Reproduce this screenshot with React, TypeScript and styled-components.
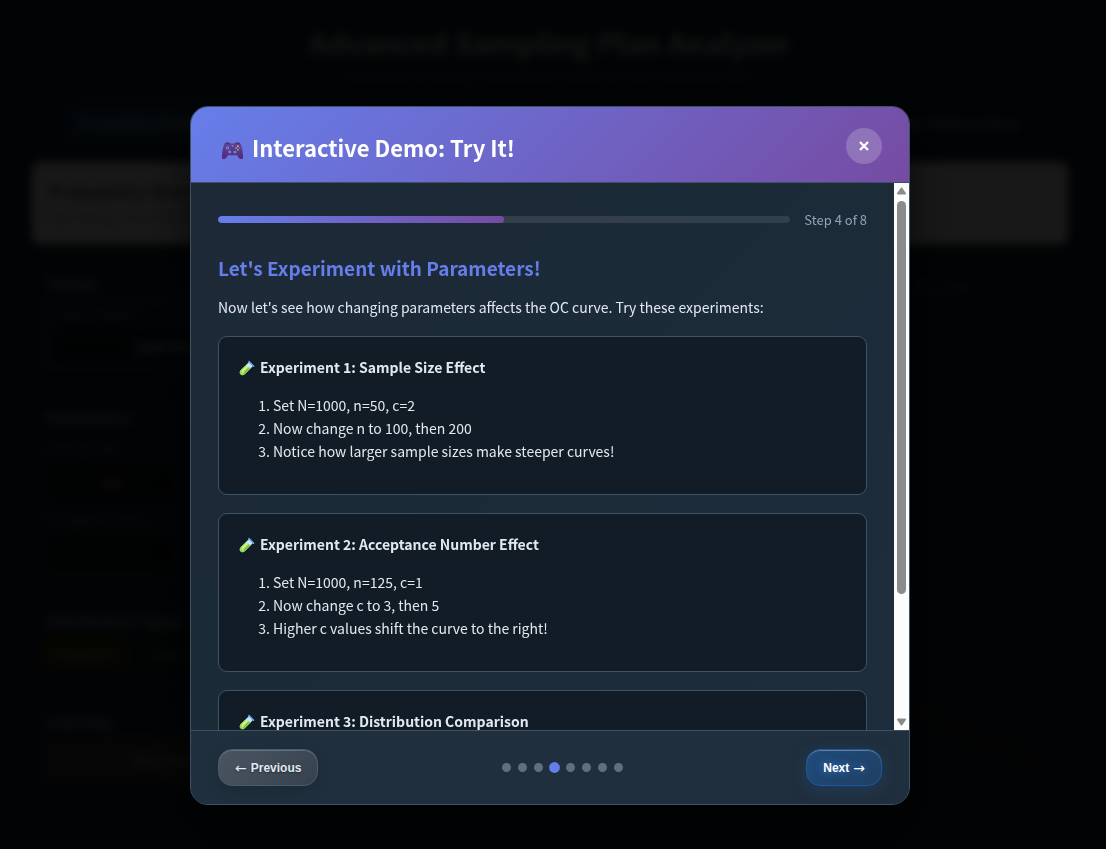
import React, { useState } from "react";
import styled, { createGlobalStyle } from "styled-components";

const bodyFont = `"Noto Sans CJK SC", "Noto Sans", sans-serif`;

const GlobalStyle = createGlobalStyle`
  *, *::before, *::after { box-sizing: border-box; }
  html { background: #14202b; }
  body {
    margin: 0;
    min-height: 100vh;
    font-family: ${bodyFont};
    font-size: 14px;
    line-height: 23px;
    color: #e2e8f0;
    overflow: hidden;
  }
  h1, h2, h3, p, ol { margin: 0; }
`;

/* ---------- analyzer page behind the dialog ---------- */

const Page = styled.main`
  display: flex;
  flex-direction: column;
  height: 100vh;
  overflow: hidden;
  padding: 20px 38px 0 32px;
`;

const PageHeader = styled.header`
  display: flex;
  flex-direction: column;
  align-items: center;
  padding-bottom: 10px;
`;

const PageTitle = styled.h1`
  font-size: 29px;
  line-height: 44px;
  font-weight: 700;
  color: #c8c8c8;
`;

const PageSubtitle = styled.p`
  font-size: 13px;
  color: #6a7078;
`;

const TabBar = styled.nav`
  display: flex;
  justify-content: space-between;
  padding: 4px 30px;
  margin-bottom: 14px;
`;

const Tab = styled.button<{ $active?: boolean }>`
  height: 43px;
  padding: 0 18px;
  border: 0;
  border-radius: 12px;
  font-family: ${bodyFont};
  font-size: 14px;
  font-weight: 600;
  color: ${(p) => (p.$active ? "#a0b4c4" : "#8a8a8a")};
  background: ${(p) => (p.$active ? "#1b3d50" : "transparent")};
`;

const Banner = styled.section`
  padding: 16px;
  height: 82px;
  border-radius: 8px;
  background: #f2f2f2;
  color: #a0a0a0;
  margin-bottom: 24px;
  flex-shrink: 0;
`;

const BannerTitle = styled.h2`
  font-size: 18px;
  line-height: 26px;
  color: #555;
`;

const Columns = styled.div`
  display: flex;
  gap: 24px;
`;

const Sidebar = styled.aside`
  flex: 0 0 290px;
  display: flex;
  flex-direction: column;
  gap: 22px;
`;

const Panel = styled.section`
  display: flex;
  flex-direction: column;
  gap: 4px;
  padding: 4px 10px 12px;
  border-radius: 12px;
  background: rgba(255, 255, 255, 0.02);
  color: #7c8590;
`;

const PanelTitle = styled.h3`
  padding-left: 4px;
  font-size: 15px;
  line-height: 23px;
  color: #a0a6ad;
`;

const ThemeBox = styled.label`
  display: flex;
  flex-direction: column;
  gap: 4px;
  padding: 0 6px 2px;
  border: 4px solid #263a66;
  border-radius: 8px;
  background: #122c3a;
  color: #5d8090;
`;

const Field = styled.input`
  width: 100%;
  height: 34px;
  border: 0;
  border-radius: 6px;
  background: #101418;
  color: #c0c0c0;
  font-family: ${bodyFont};
  text-align: center;
`;

const ThemeSelect = styled.select`
  width: 100%;
  height: 32px;
  border: 0;
  border-radius: 6px;
  background: #06141d;
  color: #f0f0f0;
  font-family: ${bodyFont};
  font-weight: 700;
  text-align: center;
  text-align-last: center;
`;

const FieldLabel = styled.label`
  display: flex;
  flex-direction: column;
  gap: 6px;
  width: 50%;
  padding: 4px 0 0 4px;
`;

const ChipRow = styled.div`
  display: flex;
  gap: 8px;
`;

const Chip = styled.button<{ $tone: string }>`
  flex: 1;
  height: 36px;
  padding: 0;
  border: 0;
  border-radius: 12px;
  font-family: ${bodyFont};
  color: #9a9a80;
  background: ${(p) => p.$tone};
`;

const TutorialButton = styled.button`
  height: 46px;
  border: 0;
  border-radius: 14px;
  background: #353a40;
  color: #a0a0a0;
  font-family: ${bodyFont};
  font-weight: 600;
`;

const ChartArea = styled.section`
  flex: 1;
  display: flex;
  flex-direction: column;
  align-items: flex-end;
  padding-top: 8px;
  color: #70757a;
`;

const Legend = styled.div`
  display: flex;
  gap: 36px;
  padding-right: 50px;
`;

const Curve = styled.svg`
  width: 100%;
  height: 480px;
`;

/* ---------- dialog ---------- */

const Overlay = styled.div`
  position: fixed;
  inset: 0;
  display: flex;
  justify-content: center;
  padding: 106px 6px 44px 0;
  background: rgba(0, 0, 0, 0.9);
  backdrop-filter: blur(5px);
`;

const Dialog = styled.section`
  display: flex;
  flex-direction: column;
  width: 100%;
  max-width: 720px;
  border: 1px solid #3d5264;
  border-radius: 18px;
  overflow: hidden;
  background: linear-gradient(135deg, #1e2936 0%, #1b2b38 50%, #1e2d3c 100%);
  box-shadow: 0 20px 50px rgba(0, 0, 0, 0.6);
`;

const DialogHeader = styled.header`
  display: flex;
  align-items: center;
  justify-content: space-between;
  padding: 21px 27px 18px;
  border-bottom: 1px solid #3d5264;
  background: linear-gradient(135deg, #667eea 0%, #764ba2 100%);
`;

const DialogTitle = styled.h2`
  display: flex;
  align-items: center;
  gap: 8px;
  padding: 2px 0 0 3px;
  font-size: 22px;
  line-height: 34px;
  font-weight: 700;
  color: #fff;

  svg {
    margin-top: 8px;
  }
`;

const CloseButton = styled.button`
  display: grid;
  place-items: center;
  width: 36px;
  height: 36px;
  padding: 0;
  border: 0;
  border-radius: 50%;
  background: rgba(255, 255, 255, 0.2);
  color: #fff;
`;

const ScrollFrame = styled.div`
  display: flex;
  flex: 1;
  min-height: 0;
`;

const DialogBody = styled.div`
  flex: 1;
  min-width: 0;
  padding: 26px 27px;
  overflow-y: scroll;
  scrollbar-width: none;
`;

const ScrollTrack = styled.div`
  display: flex;
  flex-direction: column;
  align-items: center;
  justify-content: space-between;
  width: 15px;
  padding: 4px 0;
  background: #fcfcfc;
`;

const ScrollLane = styled.div`
  flex: 1;
  width: 9px;
  margin: 6px 0;
`;

const ScrollThumb = styled.div`
  height: 77%;
  border-radius: 5px;
  background: #8b8b8b;
`;

const ProgressRow = styled.div`
  display: flex;
  align-items: center;
  gap: 14px;
  margin-bottom: 24px;
`;

const ProgressTrack = styled.div`
  flex: 1;
  height: 7px;
  border-radius: 4px;
  overflow: hidden;
  background: rgba(255, 255, 255, 0.1);
`;

const ProgressFill = styled.div`
  height: 100%;
  border-radius: 4px;
  background: linear-gradient(90deg, #667eea, #764ba2);
`;

const StepLabel = styled.span`
  font-size: 13px;
  line-height: 21px;
  color: #94a3b8;
`;

const StepTitle = styled.h3`
  margin-bottom: 14px;
  font-size: 19px;
  line-height: 28px;
  font-weight: 700;
  color: #667eea;
`;

const Intro = styled.p`
  margin-bottom: 17px;
`;

const Card = styled.article`
  padding: 19px 20px 31px;
  margin-bottom: 18px;
  border: 1px solid #3d5264;
  border-radius: 9px;
  background: #121c26;
`;

const CardTitle = styled.h3`
  display: flex;
  align-items: center;
  gap: 5px;
  margin-bottom: 15px;
  font-size: 14px;
  line-height: 23px;
  font-weight: 700;
`;

const Steps = styled.ol`
  padding-left: 34px;
`;

const DialogFooter = styled.footer`
  display: flex;
  align-items: center;
  justify-content: space-between;
  padding: 18px 27px;
  border-top: 1px solid #3d5264;
  background: #202f3d;
`;

const NavButton = styled.button<{ $primary?: boolean }>`
  display: flex;
  align-items: center;
  gap: 4px;
  height: 37px;
  padding: 0 16px;
  border: 1px solid ${(p) => (p.$primary ? "#23579a" : "#4a5b69")};
  border-radius: 14px;
  font-family: "Liberation Sans", Arial, sans-serif;
  font-size: 12px;
  font-weight: 700;
  color: ${(p) => (p.$primary ? "#fff" : "#e2e8f0")};
  text-shadow: ${(p) =>
    p.$primary ? "0 0 8px rgba(90, 160, 255, 0.6)" : "0 1px 2px rgba(0, 0, 0, 0.4)"};
  background: ${(p) =>
    p.$primary
      ? "linear-gradient(135deg, #204b7c, #1f4063)"
      : "linear-gradient(135deg, #4a5561, #35424e)"};
  box-shadow: ${(p) =>
    p.$primary
      ? "0 4px 16px rgba(35, 100, 190, 0.25), inset 0 1px 0 rgba(255, 255, 255, 0.3)"
      : "0 4px 14px rgba(0, 0, 0, 0.12), inset 0 1px 0 rgba(255, 255, 255, 0.2)"};
`;

const Arrow = styled.span`
  font-family: "DejaVu Sans", sans-serif;
  font-size: 14px;
  font-weight: 400;
`;

const Dots = styled.div`
  display: flex;
  gap: 7px;
`;

const Dot = styled.button<{ $active: boolean }>`
  width: 9px;
  height: 9px;
  padding: 0;
  border: 0;
  border-radius: 50%;
  background: ${(p) => (p.$active ? "#667eea" : "#636e78")};
  transform: scale(${(p) => (p.$active ? 1.2 : 1)});
`;

const GamepadIcon = () => (
  <svg width="23" height="20" viewBox="0 0 23 20" aria-hidden="true">
    <defs>
      <linearGradient id="pad" x1="0" y1="0" x2="0" y2="1">
        <stop offset="0" stopColor="#5a4596" />
        <stop offset="1" stopColor="#55287c" />
      </linearGradient>
    </defs>
    <path
      d="M3.800 2.600C4.600 1.700 8.200 1.600 9 2.600h5c.8-1 4.400-.9 5.200 0 1.400 1.600 2.700 8.400 2.900 12.800.1 2-.6 2.700-1.900 2.700-2.200 0-3.100-2.300-4.200-3.900H7c-1.100 1.600-2 3.900-4.200 3.900-1.300 0-2-.7-1.900-2.700C1.100 11 2.400 4.200 3.800 2.600Z"
      fill="url(#pad)"
    />
    <path d="M4.200 2.500c1-.8 3.600-.8 4.600 0M14.200 2.500c1-.8 3.600-.8 4.600 0" stroke="#3d245f" fill="none" />
    <circle cx="6.600" cy="6.900" r="1.700" fill="#7f86d6" />
    <circle cx="6.600" cy="6.900" r="0.700" fill="#5a4596" />
    <path d="M8.700 9.400v3M7.200 10.900h3" stroke="#8290d5" strokeWidth="1.100" />
    <circle cx="14" cy="11" r="1.600" fill="#7c75cc" />
    <circle cx="11.500" cy="4.800" r="0.900" fill="#8f88d0" />
    <circle cx="16.800" cy="5.300" r="1" fill="#f3b334" />
    <circle cx="18.500" cy="7" r="1" fill="#e3405f" />
    <circle cx="15.100" cy="7" r="1" fill="#3fa4ec" />
    <circle cx="16.800" cy="8.700" r="1" fill="#35cfa2" />
  </svg>
);

const TestTubeIcon = () => (
  <svg width="16" height="16" viewBox="0 0 16 16" aria-hidden="true">
    <path d="M10 2 14 6 5.700 14.200c-1.400 1.300-3.200 1.200-4.200.1s-1.100-2.800.2-4.100Z" fill="#c4e6fa" />
    <path d="M6.200 5.800 11.800 8.200 5.700 14.200c-1.400 1.300-3.200 1.200-4.200.1s-1.100-2.800.2-4.100Z" fill="#97dc4e" />
    <path d="m3.800 10.600 4-3.800" stroke="#dcf795" strokeWidth="1.800" strokeLinecap="round" />
    <path d="m4.600 13.600 5.800-5.400" stroke="#5fb83c" strokeWidth="1" />
    <path d="m10 1.600 4.600 4.600" stroke="#6ba9e2" strokeWidth="1.500" strokeLinecap="round" />
    <circle cx="3.800" cy="12.300" r="0.900" fill="#dcf795" />
  </svg>
);

const experiments = [
  {
    title: "Experiment 1: Sample Size Effect",
    steps: [
      "Set N=1000, n=50, c=2",
      "Now change n to 100, then 200",
      "Notice how larger sample sizes make steeper curves!",
    ],
  },
  {
    title: "Experiment 2: Acceptance Number Effect",
    steps: [
      "Set N=1000, n=125, c=1",
      "Now change c to 3, then 5",
      "Higher c values shift the curve to the right!",
    ],
  },
  {
    title: "Experiment 3: Distribution Comparison",
    steps: [
      "Set N=1000, n=100, c=2",
      "Switch between the distribution types",
      "Compare how closely the curves agree!",
    ],
  },
];

const STEP_COUNT = 8;

export default function App() {
  const [step, setStep] = useState(4);
  return (
    <>
      <GlobalStyle />
      <Page>
        <PageHeader>
          <PageTitle>Advanced Sampling Plan Analyzer</PageTitle>
          <PageSubtitle>Interactive Operating Characteristic curves for acceptance sampling</PageSubtitle>
        </PageHeader>
        <TabBar>
          <Tab $active>Probability Distribution</Tab>
          <Tab>Sample Table Lookup</Tab>
        </TabBar>
        <Banner>
          <BannerTitle>Probability Distribution</BannerTitle>
          Operating characteristic curve
        </Banner>
        <Columns>
          <Sidebar>
            <Panel>
              <PanelTitle>Theme</PanelTitle>
              <ThemeBox>
                Color Theme
                <ThemeSelect defaultValue="dark">
                  <option value="dark">Dark Mode</option>
                </ThemeSelect>
              </ThemeBox>
            </Panel>
            <Panel>
              <PanelTitle>Parameters</PanelTitle>
              <FieldLabel>
                Lot Size (N)
                <Field defaultValue="100" />
              </FieldLabel>
              <FieldLabel>
                Sample Size (n)
                <Field defaultValue="" />
              </FieldLabel>
            </Panel>
            <Panel>
              <PanelTitle>Distribution Types</PanelTitle>
              <ChipRow>
                <Chip $tone="#35330e">Binomial</Chip>
                <Chip $tone="#0b2a1e">Poisson</Chip>
                <Chip $tone="#14202b">Normal</Chip>
              </ChipRow>
            </Panel>
            <Panel>
              <PanelTitle>Learning</PanelTitle>
              <TutorialButton>Start Tutorial</TutorialButton>
            </Panel>
          </Sidebar>
          <ChartArea>
            <Legend>
              <span>Binomial</span>
              <span>n</span>
            </Legend>
            <Curve viewBox="0 0 700 480" preserveAspectRatio="none" aria-hidden="true">
              <path d="M0 20C260 30 380 400 680 460" fill="none" stroke="#2e2a1e" strokeWidth="8" />
            </Curve>
          </ChartArea>
        </Columns>
      </Page>

      <Overlay>
        <Dialog role="dialog" aria-modal="true" aria-labelledby="demo-title">
          <DialogHeader>
            <DialogTitle id="demo-title">
              <GamepadIcon />
              Interactive Demo: Try It!
            </DialogTitle>
            <CloseButton aria-label="Close">
              <svg width="12" height="12" viewBox="0 0 12 12" aria-hidden="true">
                <path d="m2 2 8 8M10 2l-8 8" stroke="currentColor" strokeWidth="2.400" />
              </svg>
            </CloseButton>
          </DialogHeader>
          <ScrollFrame>
            <DialogBody>
              <ProgressRow>
                <ProgressTrack>
                  <ProgressFill style={{ width: `${(step / STEP_COUNT) * 100}%` }} />
                </ProgressTrack>
                <StepLabel>
                  Step {step} of {STEP_COUNT}
                </StepLabel>
              </ProgressRow>
              <StepTitle>Let's Experiment with Parameters!</StepTitle>
              <Intro>
                Now let's see how changing parameters affects the OC curve. Try these experiments:
              </Intro>
              {experiments.map((e) => (
                <Card key={e.title}>
                  <CardTitle>
                    <TestTubeIcon />
                    {e.title}
                  </CardTitle>
                  <Steps>
                    {e.steps.map((s) => (
                      <li key={s}>{s}</li>
                    ))}
                  </Steps>
                </Card>
              ))}
            </DialogBody>
            <ScrollTrack aria-hidden="true">
              <svg width="11" height="8" viewBox="0 0 11 8">
                <path d="M5.500 1.500 9 6.500H2Z" fill="#8b8b8b" stroke="#8b8b8b" strokeWidth="2" strokeLinejoin="round" />
              </svg>
              <ScrollLane>
                <ScrollThumb />
              </ScrollLane>
              <svg width="11" height="8" viewBox="0 0 11 8">
                <path d="M5.500 6.500 2 1.500h7Z" fill="#8b8b8b" stroke="#8b8b8b" strokeWidth="2" strokeLinejoin="round" />
              </svg>
            </ScrollTrack>
          </ScrollFrame>
          <DialogFooter>
            <NavButton onClick={() => setStep(Math.max(1, step - 1))}>
              <Arrow>←</Arrow>
              Previous
            </NavButton>
            <Dots>
              {Array.from({ length: STEP_COUNT }, (_, i) => (
                <Dot
                  key={i}
                  $active={i + 1 === step}
                  aria-label={`Go to step ${i + 1}`}
                  onClick={() => setStep(i + 1)}
                />
              ))}
            </Dots>
            <NavButton $primary onClick={() => setStep(Math.min(STEP_COUNT, step + 1))}>
              Next
              <Arrow>→</Arrow>
            </NavButton>
          </DialogFooter>
        </Dialog>
      </Overlay>
    </>
  );
}
